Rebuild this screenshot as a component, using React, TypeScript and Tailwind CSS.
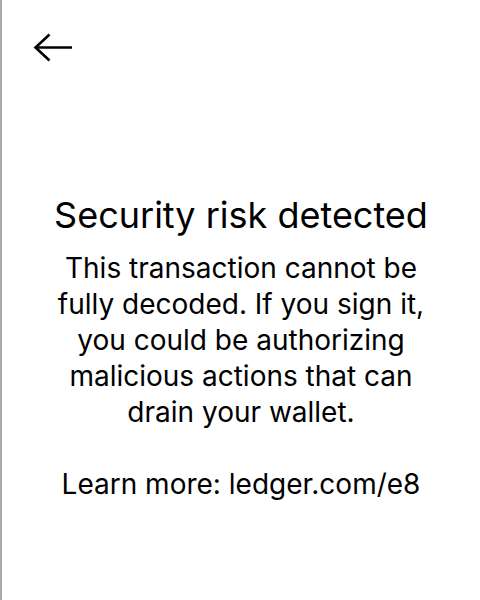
const BackArrow = () => (
  <svg width="40" height="30" viewBox="0 0 40 30" fill="none" stroke="black" strokeWidth="2.6">
    <path d="M2 14.5h37" />
    <path d="M16.5 1.5L2.5 14.5l14 13" />
  </svg>
)

const App = () => {
  return (
    <div className="h-[600px] w-[480px] border-l-2 border-[#aaaaaa] bg-white font-['Inter',sans-serif] text-black">
      <div className="pl-[31px] pt-[33px]">
        <BackArrow />
      </div>
      <div className="mt-[130px] flex flex-col items-center text-center">
        <h1 className="text-[36px] leading-[44px]">Security risk detected</h1>
        <p className="mt-[13px] text-[28px] leading-[36px]">
          This transaction cannot be
          <br />
          fully decoded. If you sign it,
          <br />
          you could be authorizing
          <br />
          malicious actions that can
          <br />
          drain your wallet.
        </p>
        <p className="mt-[36px] text-[28px] leading-[36px]">Learn more: ledger.com/e8</p>
      </div>
    </div>
  )
}

export default App
